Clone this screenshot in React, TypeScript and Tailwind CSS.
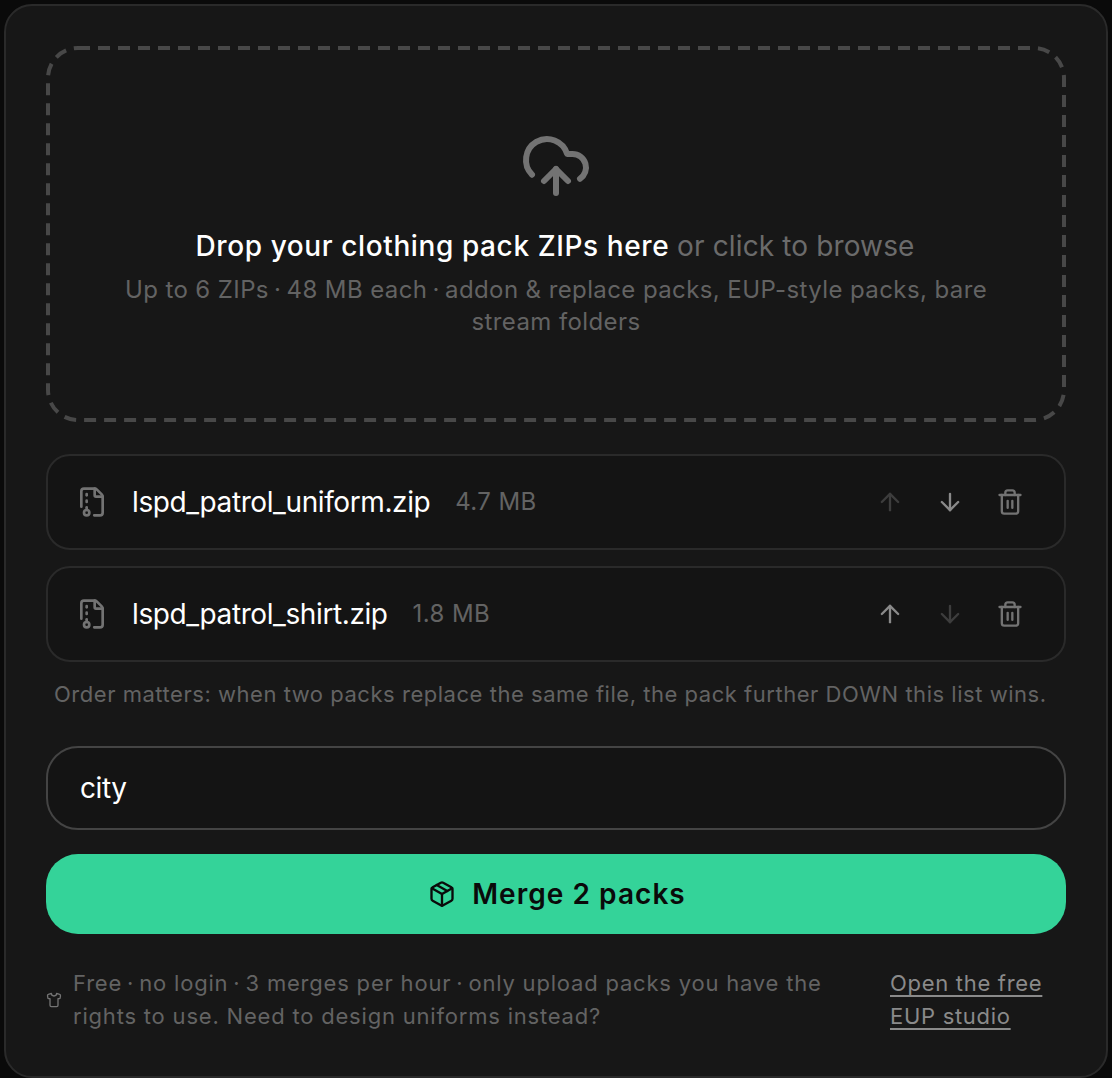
import { ArrowDown, ArrowUp, CloudUpload, FileArchive, Package, Shirt, Trash2 } from "lucide-react";

const packs = [
  { name: "lspd_patrol_uniform.zip", size: "4.7 MB", upOff: true, downOff: false },
  { name: "lspd_patrol_shirt.zip", size: "1.8 MB", upOff: false, downOff: true },
];

function Dot() {
  return <span className="[word-spacing:-2px]"> · </span>;
}

export default function App() {
  return (
    <div className="min-h-[1078px] bg-[#0a0a0a] px-1 pt-1 font-['Inter',sans-serif] text-white">
      <div className="h-[1074px] rounded-[28px] border-2 border-[#2a2a2a] bg-[#171717] p-10">
        <div className="relative flex h-[376px] flex-col items-center rounded-[32px] px-[64px] pt-[84px] text-center">
          <svg className="absolute inset-0 h-full w-full" viewBox="0 0 1020 376" fill="none">
            <rect x="2" y="2" width="1016" height="372" rx="30" stroke="#484848" strokeWidth="4" strokeDasharray="12 8" />
          </svg>
          <CloudUpload size={72} strokeWidth={2} className="text-[#737373]" />
          <p className="mt-[24px] pr-[2px] text-[28px] leading-[40px]">
            <span className="font-medium tracking-[0.6px] text-white">Drop your clothing pack ZIPs here</span>{" "}
            <span className="tracking-[0.13px] text-[#6b6b6b]">or click to browse</span>
          </p>
          <p className="mt-[8px] text-2xl leading-8 tracking-[0.4px] text-[#636363]">
            Up to 6 ZIPs<Dot />48 MB each<Dot />addon &amp; replace packs, EUP-style packs, bare
            <br />
            stream folders
          </p>
        </div>

        <div className="mt-8 flex flex-col gap-4">
          {packs.map((pack) => (
            <div key={pack.name} className="flex h-24 items-center rounded-3xl border-2 border-[#2a2a2a] bg-[#141414] pl-[28px] pr-[40px]">
              <FileArchive size={32} className="shrink-0 text-[#737373]" />
              <span className="ml-[24px] text-[28px] leading-10 tracking-[-0.4px] text-white">{pack.name}</span>
              <span className="ml-[25px] text-2xl tracking-[0.4px] text-[#636363]">{pack.size}</span>
              <div className="ml-auto flex items-center gap-[32px]">
                <ArrowUp size={28} className={pack.upOff ? "text-[#3d3d3d]" : "text-[#8a8a8a]"} />
                <ArrowDown size={28} className={pack.downOff ? "text-[#3d3d3d]" : "text-[#8a8a8a]"} />
                <Trash2 size={28} className="text-[#737373]" />
              </div>
            </div>
          ))}
        </div>

        <p className="mt-[16px] pl-[8px] text-left text-[22px] leading-8 tracking-[0.53px] text-[#636363]">
          Order matters: when two packs replace the same file, the pack further DOWN this list wins.
        </p>

        <div className="mt-[36px] flex h-[84px] items-center rounded-[32px] border-2 border-[#444444] bg-[#141414] px-8 text-[28px] tracking-[-0.4px] text-white">
          city
        </div>

        <button type="button" className="mt-6 flex h-20 w-full items-center justify-center gap-[16px] rounded-[32px] bg-[#34d399] pl-[2px] text-[28px] font-semibold tracking-[1.05px] text-[#0a0a0a]">
          <Package size={28} />
          Merge 2 packs
        </button>

        <div className="mt-[33px] flex items-center justify-between gap-6">
          <div className="flex items-center gap-[11px]">
            <Shirt size={16} className="shrink-0 text-[#737373]" />
            <p className="text-[22px] leading-[33px] tracking-[0.8px] text-[#636363]">
              Free<Dot />no login<Dot />3 merges per hour<Dot />only upload packs you have the
              <br />
              rights to use. Need to design uniforms instead?
            </p>
          </div>
          <a href="#" className="w-[176px] shrink-0 text-[22px] leading-[33px] tracking-[0.7px] text-[#8a8a8a] underline decoration-2 underline-offset-4">
            Open the free EUP studio
          </a>
        </div>
      </div>
    </div>
  );
}
